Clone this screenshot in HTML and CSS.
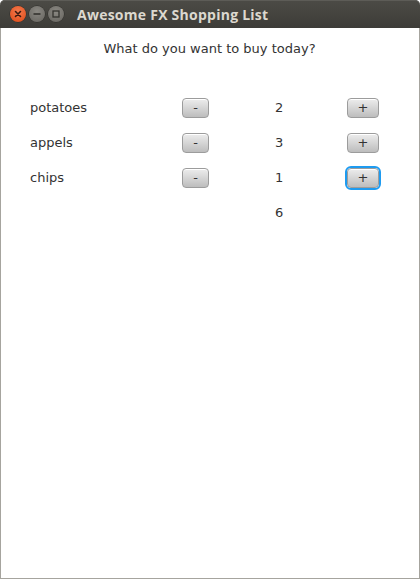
FILE: index.html
```html
<!DOCTYPE html>
<html>
<head>
<meta charset="utf-8">
<link rel="stylesheet" href="styles.css">
</head>
<body>
<div class="window">
  <div class="titlebar">
    <div class="controls">
      <span class="wbtn close"><svg width="16" height="16" viewBox="0 0 16 16"><path d="M5.5 5.5 L10.5 10.5 M10.5 5.5 L5.5 10.5" stroke="#3a1a10" stroke-width="1.6" stroke-linecap="round"/></svg></span>
      <span class="wbtn"><svg width="16" height="16" viewBox="0 0 16 16"><path d="M4.5 8 H11.5" stroke="#34332f" stroke-width="1.6"/></svg></span>
      <span class="wbtn"><svg width="16" height="16" viewBox="0 0 16 16"><rect x="5" y="5" width="6" height="6" fill="none" stroke="#34332f" stroke-width="1.3"/></svg></span>
    </div>
    <div class="title">Awesome FX Shopping List</div>
  </div>
  <div class="content">
    <div class="question">What do you want to buy today?</div>
    <div class="list">
      <div class="label">potatoes</div>
      <div class="cell"><button class="btn minus">-</button></div>
      <div class="num">2</div>
      <div class="cell"><button class="btn plus">+</button></div>

      <div class="label">appels</div>
      <div class="cell"><button class="btn minus">-</button></div>
      <div class="num">3</div>
      <div class="cell"><button class="btn plus">+</button></div>

      <div class="label">chips</div>
      <div class="cell"><button class="btn minus">-</button></div>
      <div class="num">1</div>
      <div class="cell"><button class="btn plus focused">+</button></div>

      <div class="label"></div>
      <div class="cell"></div>
      <div class="num">6</div>
      <div class="cell"></div>
    </div>
  </div>
</div>
</body>
</html>
```
FILE: styles.css
```css
html, body {
  margin: 0;
  padding: 0;
  background: #ffffff;
}
.window {
  width: 420px;
  height: 579px;
  box-sizing: border-box;
  display: flex;
  flex-direction: column;
  font-family: "DejaVu Sans", sans-serif;
  color: #333333;
}
.titlebar {
  height: 28px;
  flex: none;
  display: flex;
  align-items: center;
  background: linear-gradient(#4c4b46, #3d3c38);
  border-radius: 5px 5px 0 0;
  box-shadow: inset 0 1px 0 #5d5c57;
}
.controls {
  display: flex;
  gap: 3px;
  padding-left: 10px;
}
.wbtn {
  width: 16px;
  height: 16px;
  border-radius: 50%;
  background: radial-gradient(circle at 50% 35%, #8a8882, #65635e);
  box-shadow: 0 0 0 0.5px #2e2d2a;
  display: block;
}
.wbtn svg { display: block; }
.wbtn.close {
  background: radial-gradient(circle at 50% 35%, #f47a4e, #dd4814);
}
.title {
  margin-left: 13px;
  font-family: "Open Sans", sans-serif;
  font-weight: 700;
  font-size: 14px;
  color: #dcd8cf;
  letter-spacing: 0.25px;
}
.content {
  flex: 1;
  border: 1px solid #a6a49e;
  border-top: none;
  display: flex;
  flex-direction: column;
}
.question {
  text-align: center;
  font-size: 13px;
  line-height: 16px;
  padding-top: 13px;
  padding-right: 1px;
}
.list {
  margin-top: 33px;
  display: grid;
  grid-template-columns: 152px 93px 72px 32px;
  grid-auto-rows: 35px;
  padding-left: 29px;
  font-size: 13px;
}
.label, .num, .cell {
  display: flex;
  align-items: center;
}
.btn {
  height: 20px;
  padding: 0;
  border: 1px solid #9c9c9c;
  border-radius: 4px;
  background: linear-gradient(#ededed, #bdbdbd);
  box-shadow: inset 0 1px 0 #ffffff;
  font-family: "DejaVu Sans", sans-serif;
  font-size: 13px;
  line-height: 16px;
  color: #333333;
}
.btn.minus { width: 27px; }
.btn.plus { width: 32px; }
.btn.focused {
  outline: 2px solid #1e9bf0;
  outline-offset: 0px;
}
```
